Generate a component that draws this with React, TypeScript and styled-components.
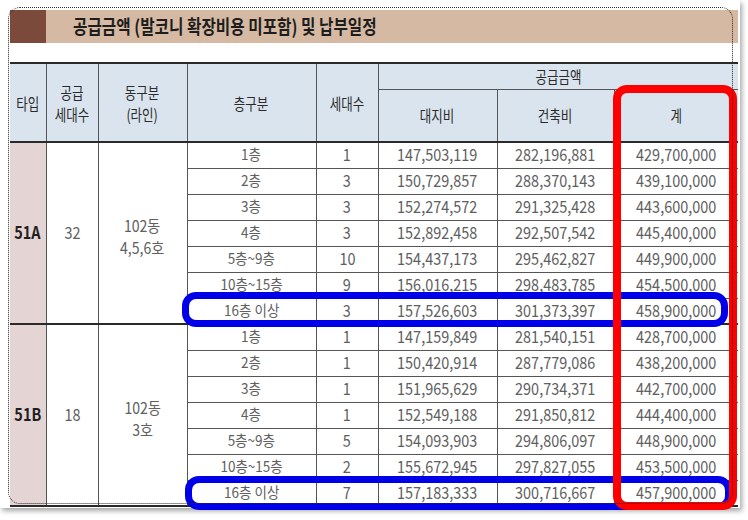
import React from 'react';
import styled, { createGlobalStyle } from 'styled-components';

const Global = createGlobalStyle`
  html, body { margin: 0; padding: 0; background: #fff; }
  body { font-family: "Noto Sans CJK KR", "Noto Sans", sans-serif; }
`;

const Page = styled.div`
  width: 748px;
  height: 520px;
  position: relative;
  overflow: hidden;
  background: #fff;
`;

const Sheet = styled.div`
  position: relative;
  width: 740px;
  height: 508px;
  box-sizing: border-box;
  padding: 10px 2px 0 10px;
  background: #fff;
  box-shadow: 2px 3px 5px rgba(0, 0, 0, 0.35);
`;

const TitleBar = styled.div`
  display: flex;
  height: 33px;
`;

const TitleMark = styled.div`
  width: 36px;
  background: #7b4a3b;
`;

const TitleBand = styled.div`
  flex: 1;
  background: #d5b9a2;
  padding-left: 27px;
  line-height: 33px;
  color: #1d1d1d;
  white-space: nowrap;
`;

const Txt = styled.span<{ $size: number; $sx: number; $bold?: boolean; $origin?: string; $dy?: number }>`
  display: inline-block;
  font-size: ${(p) => p.$size}px;
  font-weight: ${(p) => (p.$bold ? 700 : 400)};
  transform: translateY(${(p) => p.$dy ?? 0}px) scaleX(${(p) => p.$sx});
  transform-origin: ${(p) => p.$origin ?? 'center'};
  white-space: nowrap;
  line-height: 22px;
  vertical-align: top;
`;

const Table = styled.table`
  margin-top: 19px;
  width: 728px;
  table-layout: fixed;
  border-collapse: collapse;
  border-top: 2px solid #2a2a2a;
  border-bottom: 2px solid #2a2a2a;
`;

const HeadCell = styled.th<{ $first?: boolean; $last?: boolean }>`
  background: #dae4ee;
  border: 1px solid #555;
  border-left: ${(p) => (p.$first ? 'none' : '1px solid #555')};
  border-right: ${(p) => (p.$last ? 'none' : '1px solid #555')};
  font-weight: 400;
  line-height: 22px;
  color: #2b2b2b;
  text-align: center;
  padding: 0;
`;

const HeadRow = styled.tr<{ $h: number; $bottom?: boolean }>`
  height: ${(p) => p.$h}px;
  & > th { ${(p) => (p.$bottom ? 'border-bottom: 2px solid #2a2a2a;' : '')} }
`;

const BodyRow = styled.tr<{ $groupStart?: boolean }>`
  height: 26px;
  & > td { ${(p) => (p.$groupStart ? 'border-top: 2px solid #2a2a2a;' : '')} }
`;

const Cell = styled.td<{ $type?: boolean; $last?: boolean }>`
  border: 1px solid #555;
  border-left: ${(p) => (p.$type ? 'none' : '1px solid #555')};
  border-right: ${(p) => (p.$last ? 'none' : '1px solid #555')};
  background: ${(p) => (p.$type ? '#e5d4d4' : '#fff')};
  color: ${(p) => (p.$type ? '#1f1f1f' : '#606060')};
  line-height: 22px;
  text-align: center;
  padding: 0;
`;

const Mark = styled.div<{ $color: string; $w: number }>`
  position: absolute;
  box-sizing: border-box;
  border: ${(p) => p.$w}px solid ${(p) => p.$color};
  border-radius: 14px;
  pointer-events: none;
`;

const DottedFrame = styled.div`
  position: absolute;
  left: 8px;
  top: 7px;
  width: 725px;
  height: 497px;
  box-sizing: border-box;
  border: 1px dotted #2a2a2a;
  border-radius: 12px;
  pointer-events: none;
`;

const Head = ({ children }: { children: React.ReactNode }) => (
  <Txt $size={16} $sx={0.78}>{children}</Txt>
);
const Num = ({ children, bold }: { children: React.ReactNode; bold?: boolean }) => (
  <Txt $size={17} $sx={0.85} $bold={bold} $dy={-1}>{children}</Txt>
);
const Word = ({ children }: { children: React.ReactNode }) => (
  <Txt $size={15} $sx={0.9} $dy={-1}>{children}</Txt>
);

type Row = [string, string, string, string, string];

const groups: { type: string; count: string; dong: string[]; rows: Row[] }[] = [
  {
    type: '51A',
    count: '32',
    dong: ['102동', '4,5,6호'],
    rows: [
      ['1층', '1', '147,503,119', '282,196,881', '429,700,000'],
      ['2층', '3', '150,729,857', '288,370,143', '439,100,000'],
      ['3층', '3', '152,274,572', '291,325,428', '443,600,000'],
      ['4층', '3', '152,892,458', '292,507,542', '445,400,000'],
      ['5층~9층', '10', '154,437,173', '295,462,827', '449,900,000'],
      ['10층~15층', '9', '156,016,215', '298,483,785', '454,500,000'],
      ['16층 이상', '3', '157,526,603', '301,373,397', '458,900,000'],
    ],
  },
  {
    type: '51B',
    count: '18',
    dong: ['102동', '3호'],
    rows: [
      ['1층', '1', '147,159,849', '281,540,151', '428,700,000'],
      ['2층', '1', '150,420,914', '287,779,086', '438,200,000'],
      ['3층', '1', '151,965,629', '290,734,371', '442,700,000'],
      ['4층', '1', '152,549,188', '291,850,812', '444,400,000'],
      ['5층~9층', '5', '154,093,903', '294,806,097', '448,900,000'],
      ['10층~15층', '2', '155,672,945', '297,827,055', '453,500,000'],
      ['16층 이상', '7', '157,183,333', '300,716,667', '457,900,000'],
    ],
  },
];

const widths = [36, 52, 89, 129, 62, 119, 117, 124];

export default function App() {
  return (
    <Page>
      <Global />
      <Sheet>
        <TitleBar>
          <TitleMark />
          <TitleBand>
            <Txt $size={19} $sx={0.825} $bold $origin="left center" $dy={5}>
              공급금액 (발코니 확장비용 미포함) 및 납부일정
            </Txt>
          </TitleBand>
        </TitleBar>
        <Table>
          <colgroup>
            {widths.map((w, i) => (
              <col key={i} style={{ width: w }} />
            ))}
          </colgroup>
          <thead>
            <HeadRow $h={26}>
              <HeadCell $first rowSpan={2}><Head>타입</Head></HeadCell>
              <HeadCell rowSpan={2}><Head>공급<br />세대수</Head></HeadCell>
              <HeadCell rowSpan={2}><Head>동구분<br />(라인)</Head></HeadCell>
              <HeadCell rowSpan={2}><Head>층구분</Head></HeadCell>
              <HeadCell rowSpan={2}><Head>세대수</Head></HeadCell>
              <HeadCell $last colSpan={3}><Head>공급금액</Head></HeadCell>
            </HeadRow>
            <HeadRow $h={53} $bottom>
              <HeadCell><Head>대지비</Head></HeadCell>
              <HeadCell><Head>건축비</Head></HeadCell>
              <HeadCell $last><Head>계</Head></HeadCell>
            </HeadRow>
          </thead>
          <tbody>
            {groups.map((g) =>
              g.rows.map((r, i) => (
                <BodyRow key={g.type + i} $groupStart={i === 0}>
                  {i === 0 && (
                    <>
                      <Cell $type rowSpan={7}><Num bold>{g.type}</Num></Cell>
                      <Cell rowSpan={7}><Num>{g.count}</Num></Cell>
                      <Cell rowSpan={7}>
                        <Txt $size={16} $sx={0.88} $dy={3}>
                          {g.dong[0]}
                          <br />
                          {g.dong[1]}
                        </Txt>
                      </Cell>
                    </>
                  )}
                  <Cell><Word>{r[0]}</Word></Cell>
                  <Cell><Num>{r[1]}</Num></Cell>
                  <Cell><Num>{r[2]}</Num></Cell>
                  <Cell><Num>{r[3]}</Num></Cell>
                  <Cell $last><Num>{r[4]}</Num></Cell>
                </BodyRow>
              ))
            )}
          </tbody>
        </Table>
        <Mark $color="#0000e8" $w={7} style={{ left: 182, top: 292, width: 546, height: 35 }} />
        <Mark $color="#0000e8" $w={7} style={{ left: 185, top: 476, width: 547, height: 34 }} />
        <Mark $color="#ff0000" $w={8} style={{ left: 613, top: 85, width: 124, height: 425 }} />
        <DottedFrame />
      </Sheet>
    </Page>
  );
}
